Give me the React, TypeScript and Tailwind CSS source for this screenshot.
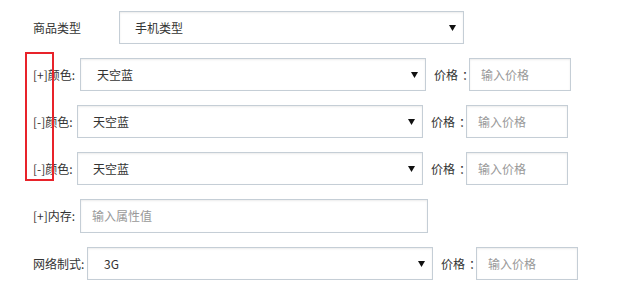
const box =
  "h-full shrink-0 border border-[#c5ced6] bg-white shadow-[inset_0_1px_2px_rgba(0,0,0,0.08)] flex items-center";

const Arrow = () => (
  <svg width="7" height="6" viewBox="0 0 7 6" className="shrink-0">
    <path d="M0 0 H7 L3.5 6 Z" fill="#111" />
  </svg>
);

const Select = ({ value, w, pl }: { value: string; w: string; pl: string }) => (
  <div className={`${box} ${w} ${pl} pr-[7px] justify-between`}>
    <span>{value}</span>
    <Arrow />
  </div>
);

const Price = () => (
  <>
    <span className="ml-[8px] w-[35px] shrink-0 whitespace-nowrap">
      价格<span className="pl-[4px]">：</span>
    </span>
    <div className={`${box} w-[102px] pl-[11px] text-[#999]`}>输入价格</div>
  </>
);

export default function App() {
  return (
    <div
      className="relative w-[626px] h-[288px] bg-white text-[12px] text-[#333] pl-[33px] pt-[11px] flex flex-col gap-[14px] whitespace-nowrap"
      style={{ fontFamily: '"Noto Sans CJK SC", "Liberation Sans", sans-serif' }}
    >
      <div className="flex items-center h-[33px]">
        <span className="w-[86px] shrink-0">商品类型</span>
        <Select value="手机类型" w="w-[345px]" pl="pl-[15px]" />
      </div>

      <div className="flex items-center h-[33px]">
        <span className="w-[47px] shrink-0">[+]颜色:</span>
        <Select value="天空蓝" w="w-[346px]" pl="pl-[16px]" />
        <Price />
      </div>

      <div className="flex items-center h-[33px]">
        <span className="w-[44px] shrink-0">[-]颜色:</span>
        <Select value="天空蓝" w="w-[346px]" pl="pl-[15px]" />
        <Price />
      </div>

      <div className="flex items-center h-[33px]">
        <span className="w-[44px] shrink-0">[-]颜色:</span>
        <Select value="天空蓝" w="w-[346px]" pl="pl-[15px]" />
        <Price />
      </div>

      <div className="flex items-center h-[34px]">
        <span className="w-[47px] shrink-0">[+]内存:</span>
        <div className={`${box} w-[348px] pl-[11px] text-[#999]`}>输入属性值</div>
      </div>

      <div className="flex items-center h-[33px]">
        <span className="w-[54px] shrink-0">网络制式:</span>
        <Select value="3G" w="w-[346px]" pl="pl-[16px]" />
        <Price />
      </div>

      {/* annotation box */}
      <div className="absolute left-[25px] top-[52px] w-[29px] h-[129px] border-2 border-[#e8232a]" />
    </div>
  );
}
